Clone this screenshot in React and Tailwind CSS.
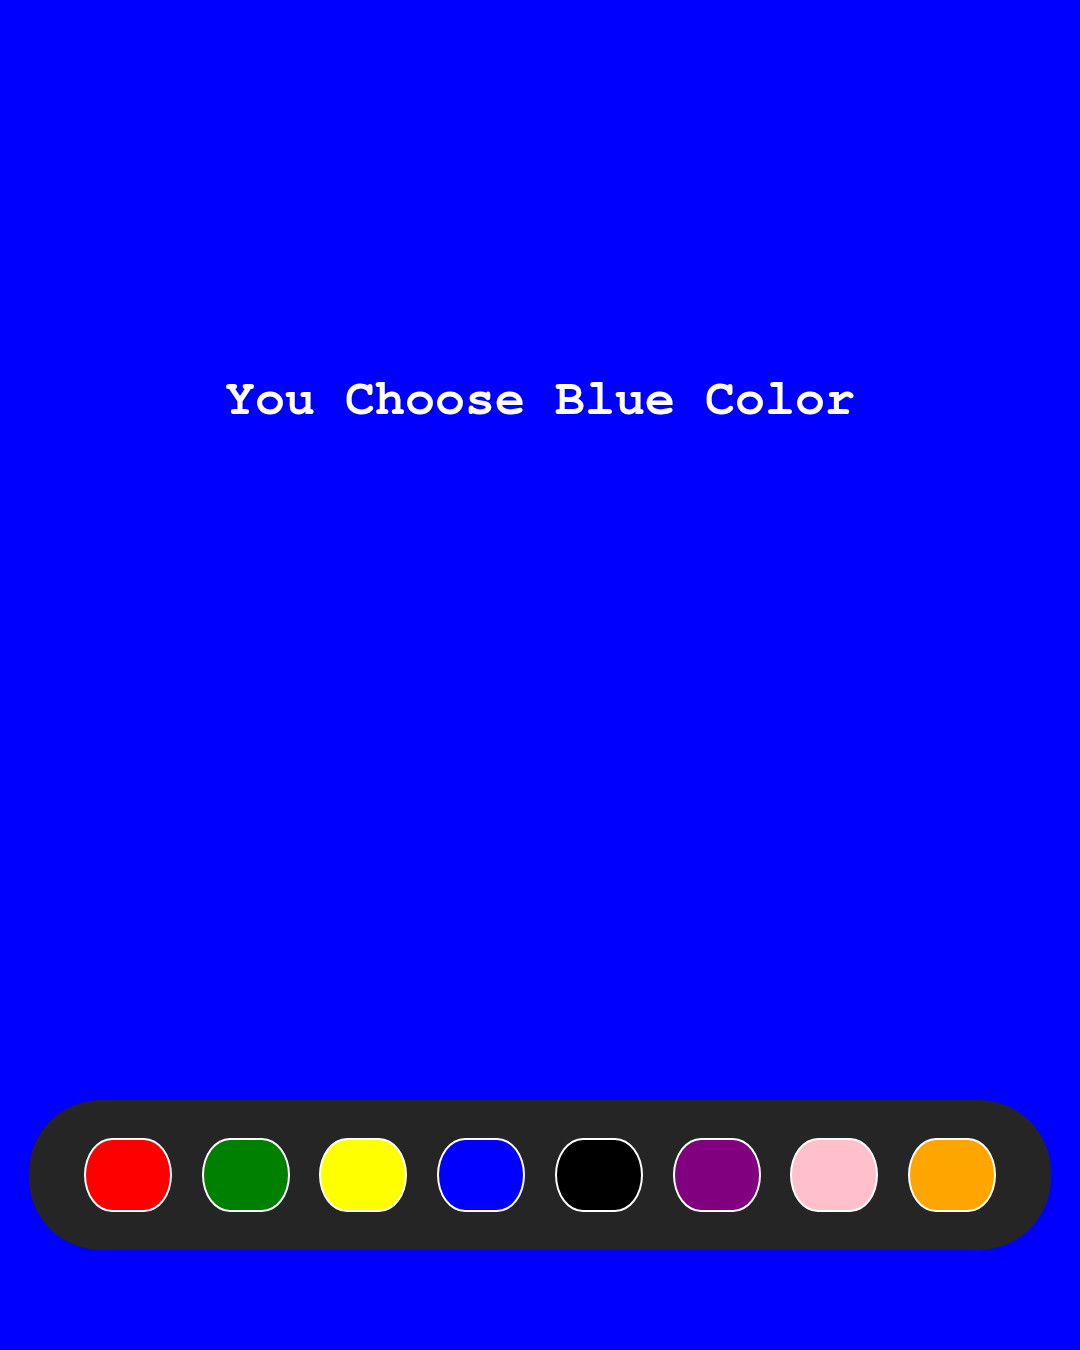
import React, { useState } from "react";

const colors = [
  { name: "Red", bg: "bg-[#ff0000]" },
  { name: "Green", bg: "bg-[#008000]" },
  { name: "Yellow", bg: "bg-[#ffff00]" },
  { name: "Blue", bg: "bg-[#0000ff]" },
  { name: "Black", bg: "bg-[#000000]" },
  { name: "Purple", bg: "bg-[#800080]" },
  { name: "Pink", bg: "bg-[#ffc0cb]" },
  { name: "Orange", bg: "bg-[#ffa500]" },
];

export default function App() {
  const [picked] = useState("Blue");

  return (
    <div className="h-[1350px] bg-[#0000ff] flex flex-col">
      {/* Message */}
      <h1 className="pt-[374px] text-center text-white text-[50px] leading-none font-bold font-['FreeMono','Liberation_Mono',monospace]">
        You Choose {picked} Color
      </h1>

      <div className="flex-1" />

      {/* Color bar */}
      <div className="mx-[29px] mb-[100px] h-[150px] rounded-[72px] bg-[#252525] px-[55px] flex items-center justify-between">
        {colors.map((c) => (
          <button
            key={c.name}
            className={`w-[88px] h-[74px] rounded-[28px/37px] border-2 border-white ${c.bg}`}
          />
        ))}
      </div>
    </div>
  );
}
